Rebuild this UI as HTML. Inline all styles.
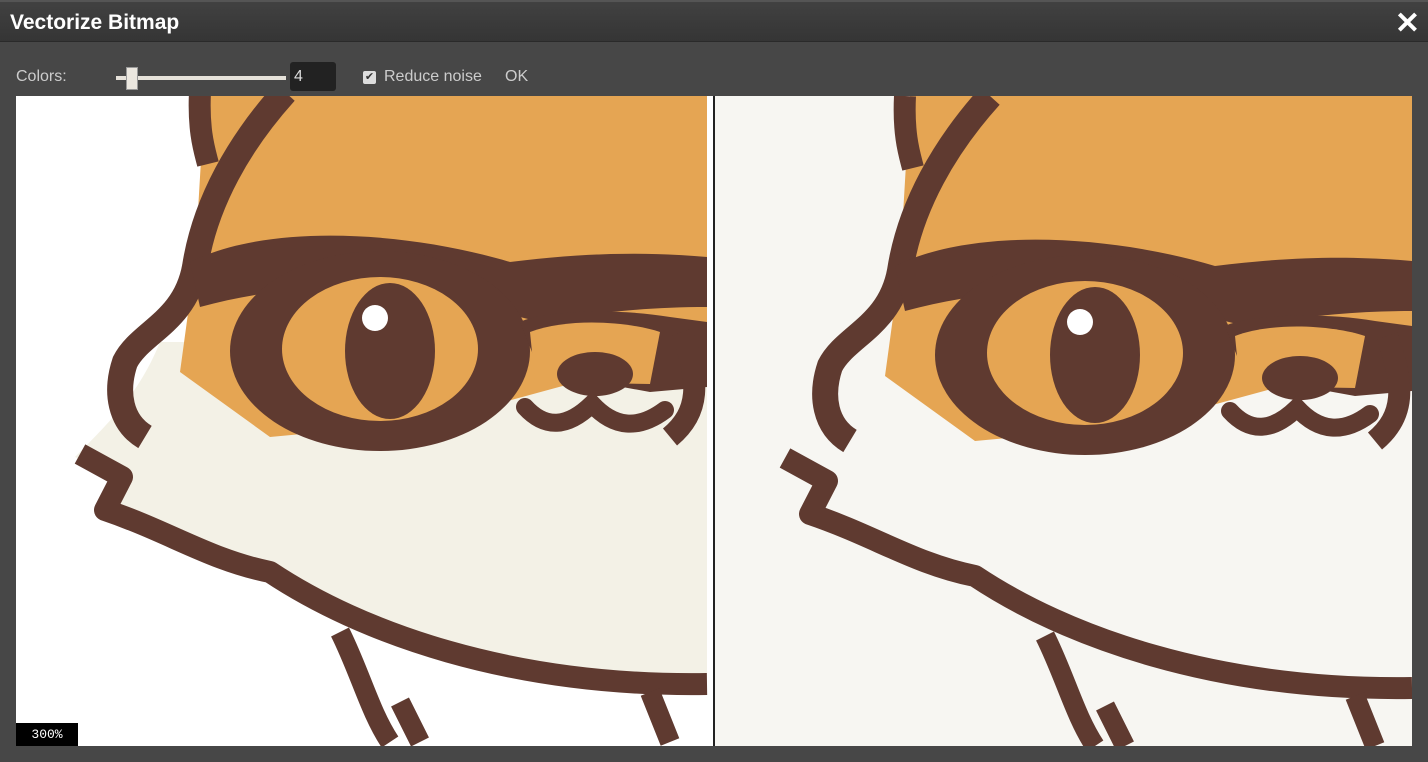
<!DOCTYPE html>
<html><head><style>
body{margin:0;width:1428px;height:762px;background:#474747;overflow:hidden;font-family:"Liberation Sans",sans-serif;position:relative}
.hdr{position:absolute;left:0;top:0;width:1428px;height:42px;background:linear-gradient(#414141,#353535);border-top:2px solid #555;border-bottom:1px solid #2a2a2a;box-sizing:border-box}
.title{position:absolute;left:10px;top:9px;color:#fff;font-weight:bold;font-size:21px}
.x{position:absolute;right:8px;top:4px;color:#fff;font-size:30px;font-weight:bold}
.lab{position:absolute;color:#ccc;font-size:16px;top:68px}
.track{position:absolute;left:116px;top:76px;width:170px;height:4px;background:#e6e2da}
.thumb{position:absolute;left:126px;top:67px;width:12px;height:23px;background:#ebe7df;border:1px solid #999;box-sizing:border-box}
.num{position:absolute;left:290px;top:62px;width:46px;height:29px;background:#222;border-radius:3px;color:#ddd;font-size:16px;line-height:29px;padding-left:4px;box-sizing:border-box}
.cb{position:absolute;left:363px;top:71px;width:13px;height:13px;background:#ddd;border-radius:2px;font-size:11px;line-height:13px;text-align:center;color:#333}
.panel{position:absolute;top:96px;width:697px;height:650px;overflow:hidden}
.zoom{position:absolute;left:16px;top:723px;width:62px;height:23px;background:#000;color:#fff;font-family:"Liberation Mono",monospace;font-size:13px;line-height:23px;text-align:center}
</style></head><body>
<div class="hdr"><div class="title">Vectorize Bitmap</div><div class="x">✕</div></div>
<div class="lab" style="left:16px">Colors:</div>
<div class="track"></div><div class="thumb"></div>
<div class="num">4</div>
<div class="cb">✔</div>
<div class="lab" style="left:384px">Reduce noise</div>
<div class="lab" style="left:505px">OK</div>
<svg width="0" height="0" style="position:absolute"><defs>
<g id="fox">
<path d="M150,250 L697,250 L697,600 C500,590 350,540 260,480 C200,470 160,440 95,420 L110,385 L65,365 C100,330 130,300 150,250 Z" fill="var(--cr)"/>
<path d="M195,0 L697,0 L697,295 L560,292 L420,330 L260,345 L170,280 L185,170 Z" fill="#e5a553"/>
<path d="M190,0 C188,40 195,60 198,72" stroke="#5f3a30" stroke-width="22" fill="none"/>
<path d="M275,0 C230,50 195,110 185,175 C175,230 130,240 115,270 C105,300 110,330 135,345" stroke="#5f3a30" stroke-width="26" fill="none"/>
<path d="M180,170 C260,130 400,140 500,170 C580,160 640,160 697,165 L697,215 C640,215 590,220 530,230 L510,225 C420,190 300,185 190,215 Z" fill="#5f3a30"/>
<ellipse cx="370" cy="259" rx="150" ry="100" fill="#5f3a30"/>
<ellipse cx="370" cy="257" rx="98" ry="72" fill="#e5a553"/>
<ellipse cx="380" cy="259" rx="45" ry="68" fill="#5f3a30"/>
<circle cx="365" cy="226" r="13" fill="#fff"/>
<path d="M510,230 C530,220 600,215 660,225 L697,230 L697,295 L640,300 L530,280 Z" fill="#5f3a30"/>
<path d="M520,240 C560,225 620,230 650,240 L640,292 L525,290 Z" fill="#e5a553"/>
<ellipse cx="585" cy="282" rx="38" ry="22" fill="#5f3a30"/>
<path d="M515,315 Q545,348 582,312 Q615,348 655,318" stroke="#5f3a30" stroke-width="18" fill="none" stroke-linecap="round"/>
<path d="M672,240 C690,290 690,320 660,345" stroke="#5f3a30" stroke-width="22" fill="none"/>
<path d="M70,362 L112,385 L95,418 C160,440 200,468 260,480 C350,540 500,595 697,592" stroke="#5f3a30" stroke-width="22" fill="none" stroke-linejoin="round"/>
<path d="M330,540 C350,580 360,620 380,650 M390,610 L410,650 M640,600 L660,650" stroke="#5f3a30" stroke-width="20" fill="none"/>
</g></defs></svg>
<div class="panel" style="left:16px;background:#fff;--cr:#f3f1e6"><svg width="697" height="650"><use href="#fox" transform="translate(-6,-4)"/></svg></div>
<div style="position:absolute;left:713px;top:96px;width:2px;height:650px;background:#222"></div>
<div class="panel" style="left:715px;background:#f7f6f2;--cr:#f7f6f2"><svg width="697" height="650"><use href="#fox"/></svg></div>
<div class="zoom">300%</div>
</body></html>
